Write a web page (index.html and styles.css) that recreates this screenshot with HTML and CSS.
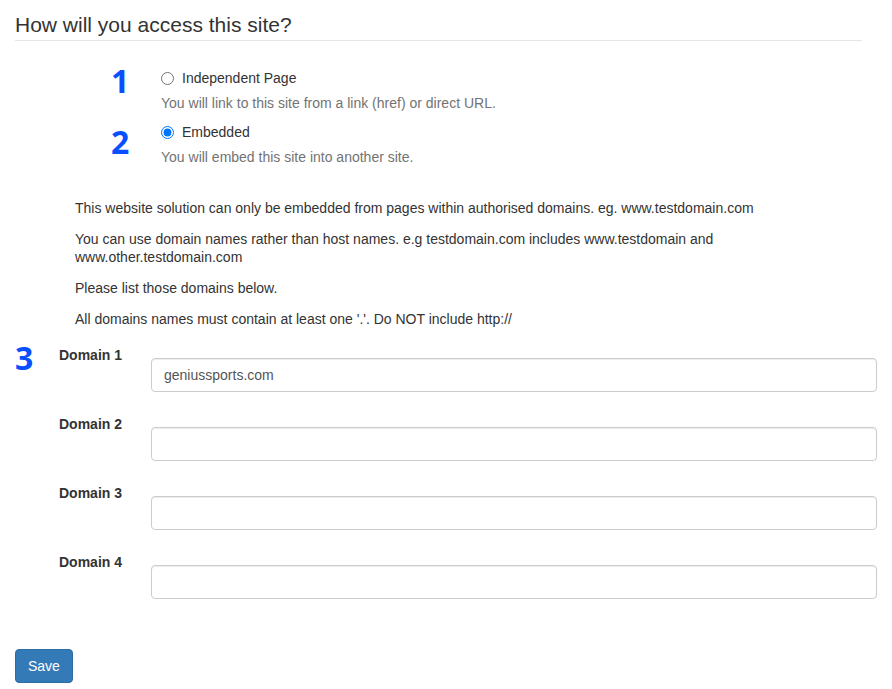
FILE: index.html
```html
<!DOCTYPE html>
<html>
<head>
<meta charset="utf-8">
<link rel="stylesheet" href="styles.css">
</head>
<body>
<div class="page">
  <h1 class="legend">How will you access this site?</h1>

  <div class="options">
    <div class="option">
      <div class="num num-1">1</div>
      <div class="choice">
        <label class="radio"><input type="radio" name="access"> <span>Independent Page</span></label>
        <div class="help">You will link to this site from a link (href) or direct URL.</div>
      </div>
    </div>
    <div class="option">
      <div class="num num-2">2</div>
      <div class="choice">
        <label class="radio"><input type="radio" name="access" checked> <span>Embedded</span></label>
        <div class="help">You will embed this site into another site.</div>
      </div>
    </div>
  </div>

  <div class="notes">
    <p>This website solution can only be embedded from pages within authorised domains. eg. www.testdomain.com</p>
    <p>You can use domain names rather than host names. e.g testdomain.com includes www.testdomain and www.other.testdomain.com</p>
    <p>Please list those domains below.</p>
    <p>All domains names must contain at least one '.'. Do NOT include http://</p>
  </div>

  <div class="domains">
    <div class="row">
      <div class="num num-3">3</div>
      <label class="row-label">Domain 1</label>
      <input class="field" type="text" value="geniussports.com">
    </div>
    <div class="row">
      <div class="num"></div>
      <label class="row-label">Domain 2</label>
      <input class="field" type="text">
    </div>
    <div class="row">
      <div class="num"></div>
      <label class="row-label">Domain 3</label>
      <input class="field" type="text">
    </div>
    <div class="row">
      <div class="num"></div>
      <label class="row-label">Domain 4</label>
      <input class="field" type="text">
    </div>
  </div>

  <button class="btn-save" type="button">Save</button>
</div>
</body>
</html>
```

FILE: styles.css
```css
* { box-sizing: border-box; }

body {
  margin: 0;
  font-family: "Liberation Sans", Arial, sans-serif;
  font-size: 14px;
  line-height: 20px;
  color: #333;
  background: #fff;
}

.page {
  padding: 15px 15px 20px 15px;
}

.legend {
  margin: 0 15px 0 0;
  font-size: 21px;
  font-weight: normal;
  line-height: 20px;
  padding-bottom: 5px;
  border-bottom: 1px solid #e5e5e5;
  color: #333;
}

.options {
  margin-top: 27px;
  padding-left: 96px;
}

.option {
  display: flex;
  align-items: flex-start;
  margin-bottom: 9px;
}

.num {
  font-family: "Open Sans", "DejaVu Sans", sans-serif;
  font-weight: 700;
  font-size: 32px;
  line-height: 32px;
  color: #0a4fff;
}

.options .num {
  width: 50px;
}

.num-1 { margin-top: -3px; }
.num-2 { margin-top: 4px; }

.radio {
  display: flex;
  align-items: center;
  height: 20px;
}

.radio input {
  margin: 0 8px 0 0;
  width: 13px;
  height: 13px;
}

.help {
  margin-top: 5px;
  color: #737373;
}

.notes {
  margin-top: 32px;
  padding-left: 60px;
}

.notes p {
  margin: 0 0 13px 0;
  line-height: 18px;
}

.domains {
  margin-top: 17px;
}

.row {
  display: flex;
  align-items: flex-start;
  margin-bottom: 22px;
}

.row .num {
  width: 44px;
  margin-top: -3px;
}

.row-label {
  width: 92px;
  font-weight: 700;
  line-height: 20px;
}

.field {
  flex: 1;
  margin-top: 13px;
  height: 34px;
  padding: 6px 12px;
  font-family: "Liberation Sans", Arial, sans-serif;
  font-size: 14px;
  color: #555;
  border: 1px solid #ccc;
  border-radius: 4px;
  box-shadow: inset 0 1px 1px rgba(0,0,0,0.075);
  background: #fff;
}

.btn-save {
  margin-top: 28px;
  height: 34px;
  padding: 6px 12px;
  font-family: "Liberation Sans", Arial, sans-serif;
  font-size: 14px;
  line-height: 20px;
  color: #fff;
  background: #337ab7;
  border: 1px solid #2e6da4;
  border-radius: 4px;
}
```
